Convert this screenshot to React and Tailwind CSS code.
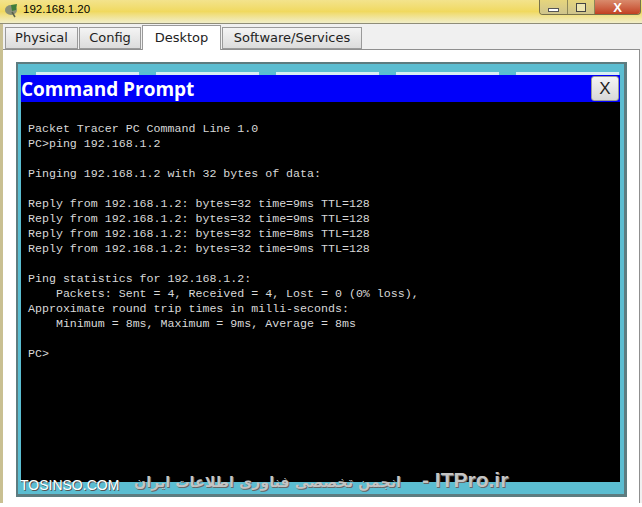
const lines = [
    "Packet Tracer PC Command Line 1.0",
    "PC>ping 192.168.1.2",
    "",
    "Pinging 192.168.1.2 with 32 bytes of data:",
    "",
    "Reply from 192.168.1.2: bytes=32 time=9ms TTL=128",
    "Reply from 192.168.1.2: bytes=32 time=9ms TTL=128",
    "Reply from 192.168.1.2: bytes=32 time=8ms TTL=128",
    "Reply from 192.168.1.2: bytes=32 time=9ms TTL=128",
    "",
    "Ping statistics for 192.168.1.2:",
    "    Packets: Sent = 4, Received = 4, Lost = 0 (0% loss),",
    "Approximate round trip times in milli-seconds:",
    "    Minimum = 8ms, Maximum = 9ms, Average = 8ms",
    "",
    "PC>",
]

const tabs = [
    { name: "Physical", width: "w-[73px]" },
    { name: "Config", width: "w-[62px]" },
    { name: "Desktop", width: "w-[79px]", active: true },
    { name: "Software/Services", width: "w-[140px]" },
]

const App = () => {
    return (
        <div className="relative w-[642px] h-[507px] overflow-hidden bg-white font-['Liberation_Sans',sans-serif]">
            {/* Title bar */}
            <div className="h-[24px] flex items-start justify-between bg-gradient-to-b from-[#f3e38c] via-[#f0d95f] to-[#f1eec8] border-b border-[#8f8d78]">
                <div className="flex items-center h-[20px] pl-[3px] gap-[3px]">
                    <svg width="17" height="16" viewBox="0 0 17 16">
                        <ellipse cx="8" cy="8" rx="6" ry="5" fill="#8a9078" />
                        <path d="M8 3l6-1-1 6-4 1z" fill="#3f7d3a" />
                        <path d="M9 10l3 5" stroke="#59604a" strokeWidth="1.5" />
                    </svg>
                    <span className="text-[11.5px] text-black">192.168.1.20</span>
                </div>
                <div className="flex h-[15px] mr-[1px] border border-t-0 border-[#77714a] rounded-b-[4px] overflow-hidden">
                    <div className="w-[28px] flex items-center justify-center bg-gradient-to-b from-[#e6d57c] to-[#cfc48c] border-r border-[#8d8758]">
                        <div className="w-[11px] h-[4px] mt-[6px] bg-white border border-[#555]"></div>
                    </div>
                    <div className="w-[27px] flex items-center justify-center bg-gradient-to-b from-[#e6d57c] to-[#cfc48c] border-r border-[#8d8758]">
                        <div className="w-[10px] h-[9px] border border-[#444] bg-[#eee6b0]"></div>
                    </div>
                    <div className="w-[45px] flex items-center justify-center bg-gradient-to-b from-[#d98a6c] to-[#c23f20] text-white text-[13px] font-bold leading-none">
                        X
                    </div>
                </div>
            </div>

            <div className="h-[479px] border-l-[3px] border-[#c9c092] bg-[#f0f0f0]">
                {/* Tabs */}
                <div className="h-[25px] flex items-end pl-[2px] gap-[1px]">
                    {tabs.map((tab, key) => (
                        <div
                            key={key}
                            className={tab.active
                                ? `${tab.width} relative z-10 h-[25px] -mb-px bg-white border border-b-0 border-[#9a9a9a] flex items-center justify-center text-[13px] text-[#222] font-['DejaVu_Sans',sans-serif] pb-[1px]`
                                : `${tab.width} h-[22px] bg-gradient-to-b from-[#f4f4f4] to-[#dcdcdc] border border-[#9a9a9a] flex items-center justify-center text-[13px] text-[#222] font-['DejaVu_Sans',sans-serif]`}
                        >
                            {tab.name}
                        </div>
                    ))}
                </div>

                {/* Desktop panel */}
                <div className="h-[454px] w-[637px] bg-white border-t border-r border-[#8f8f8f] pt-[12px] pl-[13px]">
                    <div className="w-[611px] h-[435px] bg-[#5bbdd1] border-2 border-[#5d7c80] border-b-[3px] border-r-[3px] pl-[3px] pt-[8px]">
                        <div className="flex gap-[17px] pl-[15px] h-[3px]">
                            <div className="w-[103px] bg-[#d8eef2]"></div>
                            <div className="w-[103px] bg-[#d8eef2]"></div>
                            <div className="w-[103px] bg-[#d8eef2]"></div>
                            <div className="w-[103px] bg-[#d8eef2]"></div>
                            <div className="w-[103px] bg-[#d8eef2]"></div>
                        </div>
                        <div className="w-[599px]">
                            <div className="h-[27px] bg-[#0000fa] flex items-center justify-between">
                                <span className="text-[19px] font-bold text-white font-['Open_Sans',sans-serif] pt-[2px]">Command Prompt</span>
                                <div className="w-[28px] h-[25px] mr-[1px] flex items-center justify-center rounded-[3px] border border-[#9a9a9a] bg-gradient-to-b from-[#f4f4f4] to-[#d8d8d8] text-[17px] text-[#222]">
                                    X
                                </div>
                            </div>
                            <div className="h-[380px] bg-black pl-[7px] pt-[19px]">
                                <pre className="text-[11.64px] leading-[15px] text-[#d8d8d8] font-['Liberation_Mono',monospace]">
                                    {lines.join("\n")}
                                </pre>
                            </div>
                        </div>
                    </div>
                </div>
            </div>

            {/* Watermark */}
            <div className="absolute left-[20px] top-[478px] text-[14px] leading-none text-white [text-shadow:1px_1px_0_#555]">
                TOSINSO.COM
            </div>
            <div dir="ltr" className="absolute left-[134px] top-[469px] whitespace-nowrap text-[14.3px] leading-[22px] font-bold text-[#c4c4c4] [text-shadow:1px_1px_0_#666] font-['DejaVu_Sans',sans-serif]">
                <span dir="rtl">انجمن تخصصی فناوری اطلاعات ایران</span>
                <span className="font-['Liberation_Sans',sans-serif] text-[21px] ml-[21px]">- ITPro.ir</span>
            </div>
        </div>
    )
}

export default App
